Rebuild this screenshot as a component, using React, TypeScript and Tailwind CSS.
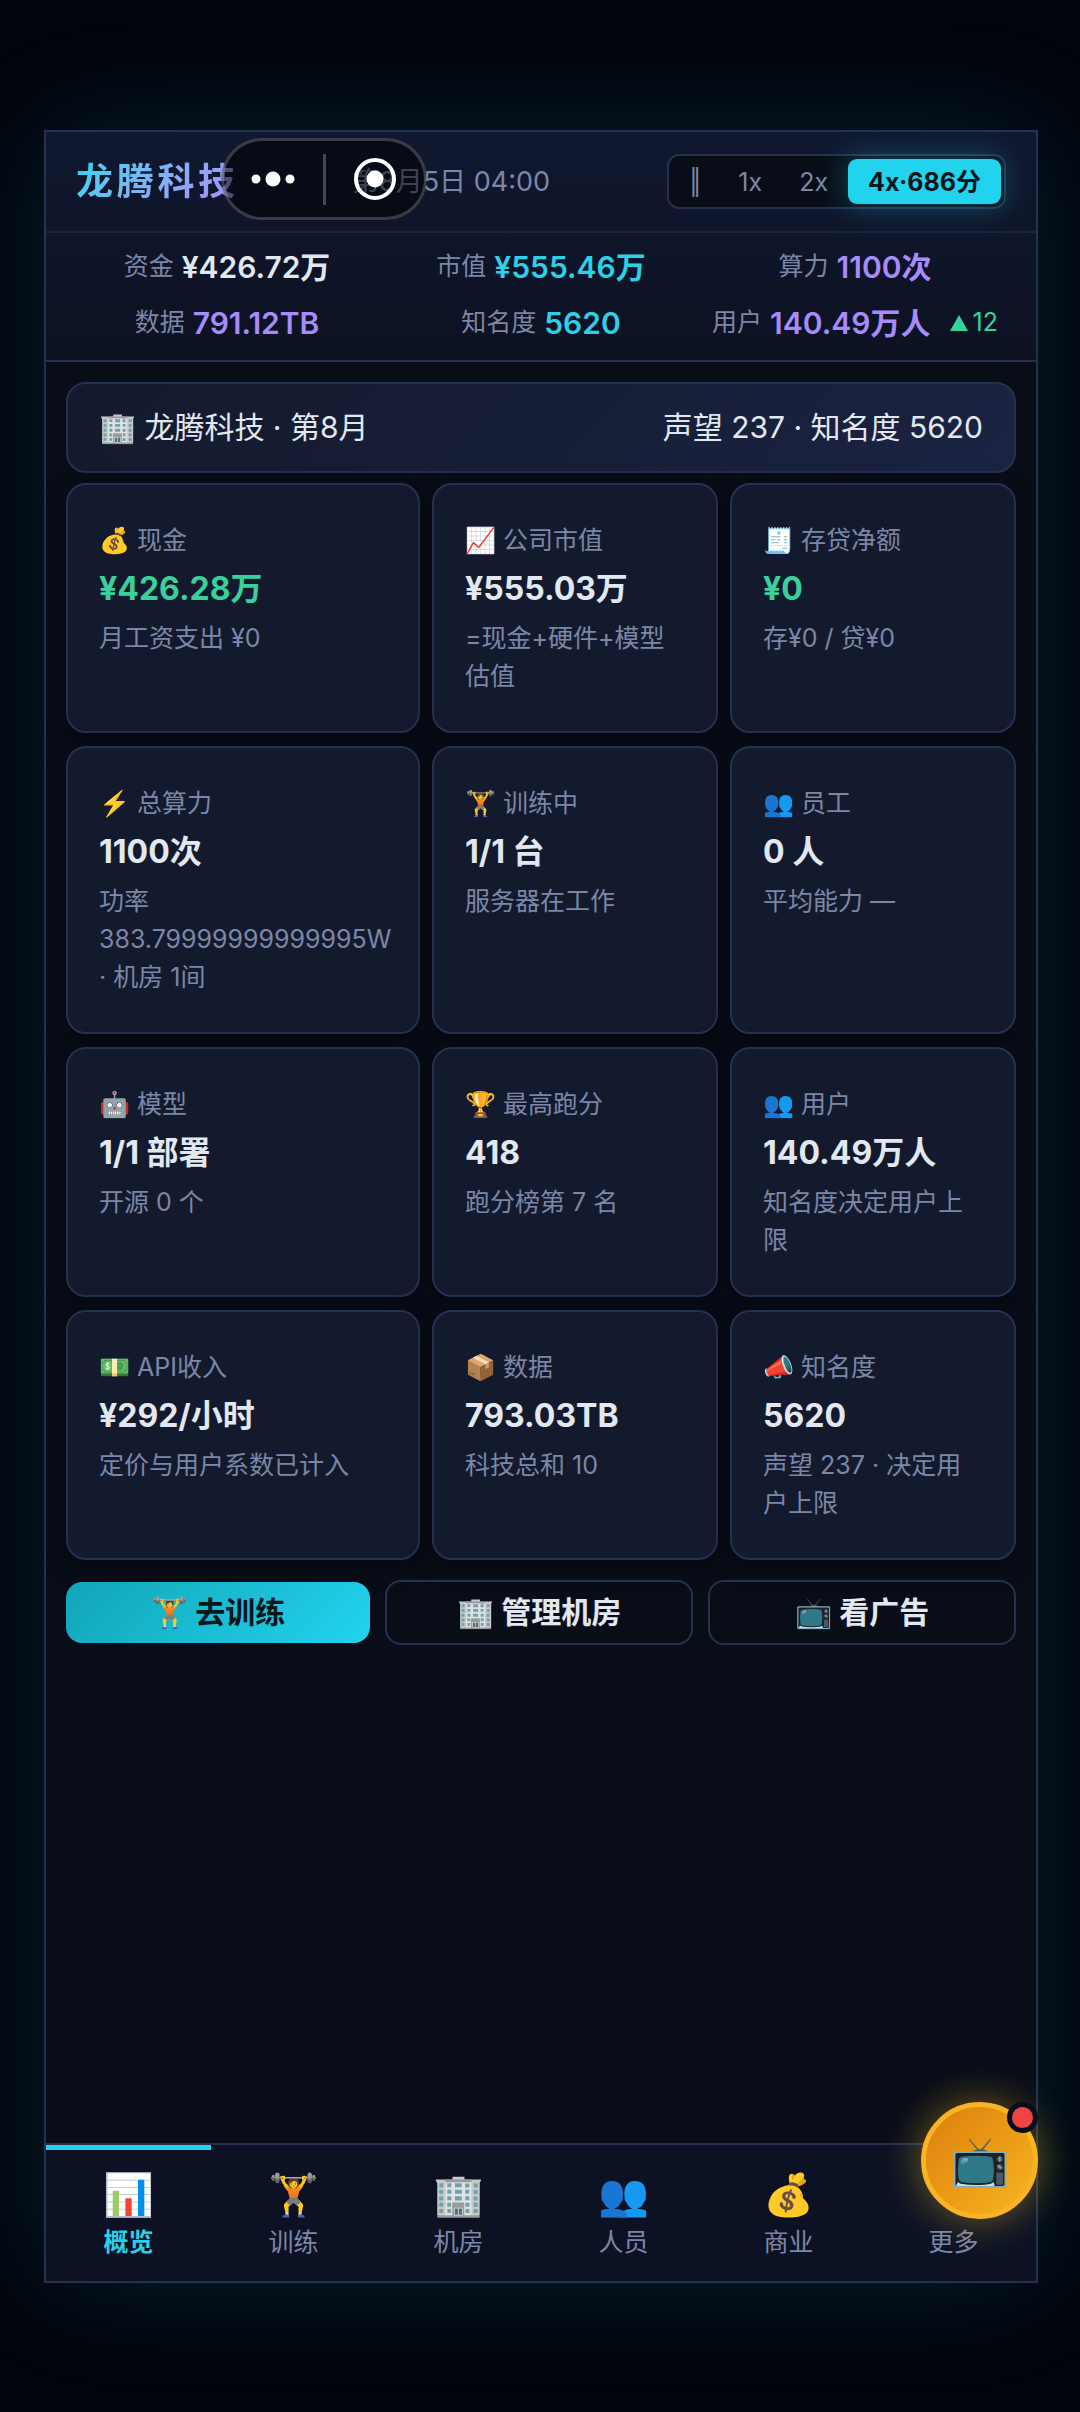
import clsx from "clsx";
import { useState } from "react";

type Stat = {
  label: string;
  value: string;
  color: string;
  delta?: string;
};

type Card = {
  icon: string;
  label: string;
  value: string;
  note: string;
  positive?: boolean;
};

const stats: Stat[] = [
  { label: "资金", value: "¥426.72万", color: "text-slate-200" },
  { label: "市值", value: "¥555.46万", color: "text-[#2dd0e8]" },
  { label: "算力", value: "1100次", color: "text-[#a78bfa]" },
  { label: "数据", value: "791.12TB", color: "text-[#a78bfa]" },
  { label: "知名度", value: "5620", color: "text-[#2dd0e8]" },
  { label: "用户", value: "140.49万人", color: "text-[#a78bfa]", delta: "12" },
];

const cards: Card[] = [
  { icon: "💰", label: "现金", value: "¥426.28万", note: "月工资支出 ¥0", positive: true },
  { icon: "📈", label: "公司市值", value: "¥555.03万", note: "=现金+硬件+模型估值" },
  { icon: "🧾", label: "存贷净额", value: "¥0", note: "存¥0 / 贷¥0", positive: true },
  { icon: "⚡", label: "总算力", value: "1100次", note: "功率 383.79999999999995W · 机房 1间" },
  { icon: "🏋️", label: "训练中", value: "1/1 台", note: "服务器在工作" },
  { icon: "👥", label: "员工", value: "0 人", note: "平均能力 —" },
  { icon: "🤖", label: "模型", value: "1/1 部署", note: "开源 0 个" },
  { icon: "🏆", label: "最高跑分", value: "418", note: "跑分榜第 7 名" },
  { icon: "👥", label: "用户", value: "140.49万人", note: "知名度决定用户上限" },
  { icon: "💵", label: "API收入", value: "¥292/小时", note: "定价与用户系数已计入" },
  { icon: "📦", label: "数据", value: "793.03TB", note: "科技总和 10" },
  { icon: "📣", label: "知名度", value: "5620", note: "声望 237 · 决定用户上限" },
];

const speeds = ["‖", "1x", "2x", "4x·686分"];

const tabs = [
  { icon: "📊", label: "概览" },
  { icon: "🏋️", label: "训练" },
  { icon: "🏢", label: "机房" },
  { icon: "👥", label: "人员" },
  { icon: "💰", label: "商业" },
  { icon: "", label: "更多" },
];

function Header() {
  const [speed, setSpeed] = useState(3);

  return (
    <header className="border-b-2 border-[#233250] bg-linear-to-b from-[#101830] to-[#0d1222]">
      <div className="flex h-[101px] items-center justify-between border-b-2 border-[#1a2540] px-[30px]">
        <h1 className="w-[276px] shrink-0">
          <span className="inline-block bg-linear-135 from-[#22d3ee] to-[#a78bfa] bg-clip-text text-[37px] leading-10 font-bold tracking-widest text-transparent">
            龙腾科技
          </span>
        </h1>
        <time className="flex-1 text-[27px] leading-10 text-[#7c87a8]">第8月5日 04:00</time>
        <div className="flex gap-[3px] rounded-xl border-2 border-[#233250] bg-[#090d18] p-[3px]">
          {speeds.map((item, index) => (
            <button
              key={item}
              onClick={() => setSpeed(index)}
              className={clsx(
                "h-[45px] rounded-[9px] text-[25px] leading-[38px]",
                index === speed
                  ? "bg-[#22d3ee] px-5 font-bold text-[#06141c] shadow-[0_0_32px_rgba(34,211,238,0.35)]"
                  : "px-[17px] text-[#7c87a8]"
              )}
            >
              {item}
            </button>
          ))}
        </div>
      </div>
      <dl className="grid grid-cols-3 gap-y-3 px-6 pt-3 pb-[15px]">
        {stats.map((stat) => (
          <div key={stat.label} className="flex h-11 items-center justify-center whitespace-nowrap">
            <dt className="mr-2 text-[25px] text-[#7c87a8]">{stat.label}</dt>
            <dd className={clsx("text-[30px] font-semibold", stat.color)}>{stat.value}</dd>
            {stat.delta && (
              <dd className="ml-5 flex items-center gap-1 text-[25px] text-[#34d399]">
                <svg className="size-[18px]" viewBox="0 0 18 18" fill="currentColor">
                  <path d="M9 1 18 17H0Z" />
                </svg>
                {stat.delta}
              </dd>
            )}
          </div>
        ))}
      </dl>
    </header>
  );
}

function StatCard({ card }: { card: Card }) {
  return (
    <article className="rounded-[20px] border-2 border-[#233250] bg-[#141a2d] px-[31px] py-9 shadow-[0_6px_24px_rgba(0,0,0,0.4)]">
      <h2 className="text-[25px] leading-[38px] text-[#7c87a8]">
        {card.icon} {card.label}
      </h2>
      <p
        className={clsx(
          "py-1.5 text-[32px] leading-12 font-bold",
          card.positive ? "text-[#3bd09b]" : "text-slate-200"
        )}
      >
        {card.value}
      </p>
      <p className="text-[25px] leading-[38px] text-[#7c87a8]">{card.note}</p>
    </article>
  );
}

function TabBar() {
  const [active, setActive] = useState(0);

  return (
    <nav className="grid grid-cols-6 border-t-2 border-[#233250] bg-[#0c1224]">
      {tabs.map((tab, index) => (
        <button
          key={tab.label}
          onClick={() => setActive(index)}
          className={clsx(
            "flex h-[136px] flex-col items-center border-t-[5px] pt-4 text-[25px]",
            index === active
              ? "border-[#2bd0e8] font-bold text-[#2bd0e8]"
              : "border-transparent text-[#7c87a8]"
          )}
        >
          <span className="h-14 text-[41px] leading-14 font-normal">{tab.icon}</span>
          <span className="leading-10">{tab.label}</span>
        </button>
      ))}
    </nav>
  );
}

// Host app's floating capsule, drawn over the header
function HostCapsule() {
  return (
    <div className="absolute top-[138px] left-[221px] flex h-[82px] w-[206px] items-center rounded-full border-[3px] border-white/20 bg-black/50">
      <button aria-label="菜单" className="flex flex-1 justify-center">
        <svg className="h-4 w-11" viewBox="0 0 44 16" fill="white">
          <circle cx="5" cy="8" r="4.5" />
          <circle cx="22" cy="8" r="7.5" />
          <circle cx="39" cy="8" r="4.5" />
        </svg>
      </button>
      <span className="h-[51px] w-[3px] bg-white/25" />
      <button aria-label="关闭" className="flex flex-1 justify-center">
        <svg className="size-[42px]" viewBox="0 0 42 42" fill="none">
          <circle cx="21" cy="21" r="19" stroke="white" strokeWidth="4" />
          <circle cx="21" cy="21" r="8.5" fill="white" />
        </svg>
      </button>
    </div>
  );
}

export default function App() {
  return (
    <div className="relative flex min-h-screen flex-col bg-[#02040c] pt-[130px] pr-[42px] pb-[129px] pl-11 font-['Inter','Noto_Sans_CJK_SC',sans-serif] text-slate-200">
      <div className="relative flex flex-1 flex-col border-2 border-[#233250] bg-[#090d18] shadow-[0_0_110px_rgba(34,211,238,0.14)]">
        <Header />
        <main className="flex-1 p-5">
          <div className="mb-2.5 flex h-[91px] items-center justify-between rounded-[20px] border-2 border-[#233250] bg-linear-135 from-[#141a2d] to-[#1a2342] px-[31px] text-[30px]">
            <span>🏢 龙腾科技 · 第8月</span>
            <span>声望 237 · 知名度 5620</span>
          </div>
          <div className="grid grid-cols-[minmax(0,354fr)_minmax(0,286fr)_minmax(0,286fr)] gap-x-3 gap-y-[13px]">
            {cards.map((card, index) => (
              <StatCard key={index} card={card} />
            ))}
          </div>
          <div className="mt-5 flex items-center gap-[15px] text-[30px] leading-[45px] font-semibold">
            <button className="flex-1 rounded-2xl bg-linear-135 from-[#12a5b8] to-[#22d3ee] px-4 py-2 text-[#06141c]">
              🏋️ 去训练
            </button>
            <button className="flex-1 rounded-2xl border-2 border-[#233250] px-4 py-2">
              🏢 管理机房
            </button>
            <button className="flex-1 rounded-2xl border-2 border-[#233250] px-4 py-2">
              📺 看广告
            </button>
          </div>
        </main>
        <TabBar />
        <button
          aria-label="看广告"
          className="absolute -right-0.5 bottom-[62px] flex size-[117px] items-center justify-center rounded-full border-[5px] border-[#f8b424] bg-linear-135 from-[#db7f0b] to-[#f8b51f] text-[48px] shadow-[0_0_40px_rgba(251,191,36,0.45)]"
        >
          📺
          <span className="absolute -top-[5px] -right-[5px] size-[31px] rounded-full border-[5px] border-[#0a0e1a] bg-[#ef4444]" />
        </button>
      </div>
      <HostCapsule />
    </div>
  );
}
